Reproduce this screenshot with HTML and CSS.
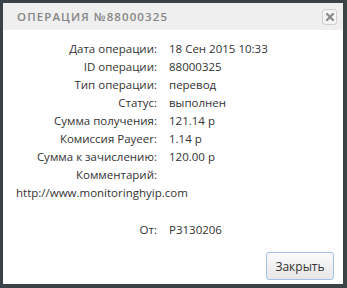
FILE: index.html
```html
<!DOCTYPE html>
<html>
<head>
<meta charset="utf-8">
<link rel="stylesheet" href="styles.css">
</head>
<body>
<div class="dialog">
  <div class="titlebar">
    <span class="title">ОПЕРАЦИЯ №88000325</span>
    <span class="close"><svg width="8" height="8" viewBox="0 0 8 8"><path d="M1 1L7 7M7 1L1 7" stroke="#8a8a8a" stroke-width="2.2" stroke-linecap="square"/></svg></span>
  </div>
  <div class="content">
    <div class="grid">
      <div class="label">Дата операции:</div><div class="value">18 Сен 2015 10:33</div>
      <div class="label">ID операции:</div><div class="value">88000325</div>
      <div class="label">Тип операции:</div><div class="value">перевод</div>
      <div class="label">Статус:</div><div class="value status">выполнен</div>
      <div class="label">Сумма получения:</div><div class="value">121.14 р</div>
      <div class="label">Комиссия Payeer:</div><div class="value">1.14 р</div>
      <div class="label">Сумма к зачислению:</div><div class="value">120.00 р</div>
      <div class="label">Комментарий:</div><div class="value"></div>
    </div>
    <div class="comment">http://www.monitoringhyip.com</div>
    <div class="grid from">
      <div class="label">От:</div><div class="value">P3130206</div>
    </div>
  </div>
  <div class="footer">
    <button class="btn">Закрыть</button>
  </div>
</div>
</body>
</html>
```
FILE: styles.css
```css
html, body {
  margin: 0;
  padding: 0;
}
body {
  background: #3a4347;
  width: 347px;
  height: 288px;
  padding: 3px 0 0 3px;
  box-sizing: border-box;
  font-family: "Open Sans", "DejaVu Sans", sans-serif;
  font-size: 11.5px;
  color: #333;
}
.dialog {
  width: 340px;
  height: 281px;
  background: #fff;
  display: flex;
  flex-direction: column;
}
.titlebar {
  height: 27px;
  background: #efefef;
  display: flex;
  align-items: center;
  justify-content: space-between;
  padding: 0 6px 0 14px;
  flex: none;
}
.title {
  font-size: 11.5px;
  font-weight: 600;
  letter-spacing: 1.1px;
  color: #858585;
}
.close {
  width: 13px;
  height: 14px;
  border: 1px solid #d0d0d0;
  border-radius: 3px;
  background: #f3f3f3;
  display: flex;
  align-items: center;
  justify-content: center;
}
.content {
  padding-top: 10px;
  flex: 1;
}
.grid {
  display: grid;
  grid-template-columns: 154px 1fr;
  column-gap: 12px;
  line-height: 18px;
}
.label {
  text-align: right;
}
.value {
  white-space: nowrap;
}
.comment {
  line-height: 18px;
  padding-left: 13px;
}
.from {
  margin-top: 19px;
}
.footer {
  display: flex;
  justify-content: flex-end;
  padding: 0 9px 4px 0;
}
.btn {
  width: 68px;
  height: 28px;
  border: 1px solid #a4bfe6;
  border-radius: 3px;
  background: linear-gradient(#fbfbfb, #e6e6e6);
  font-family: "Open Sans", "DejaVu Sans", sans-serif;
  font-size: 12px;
  color: #333;
  padding: 0;
}
```
